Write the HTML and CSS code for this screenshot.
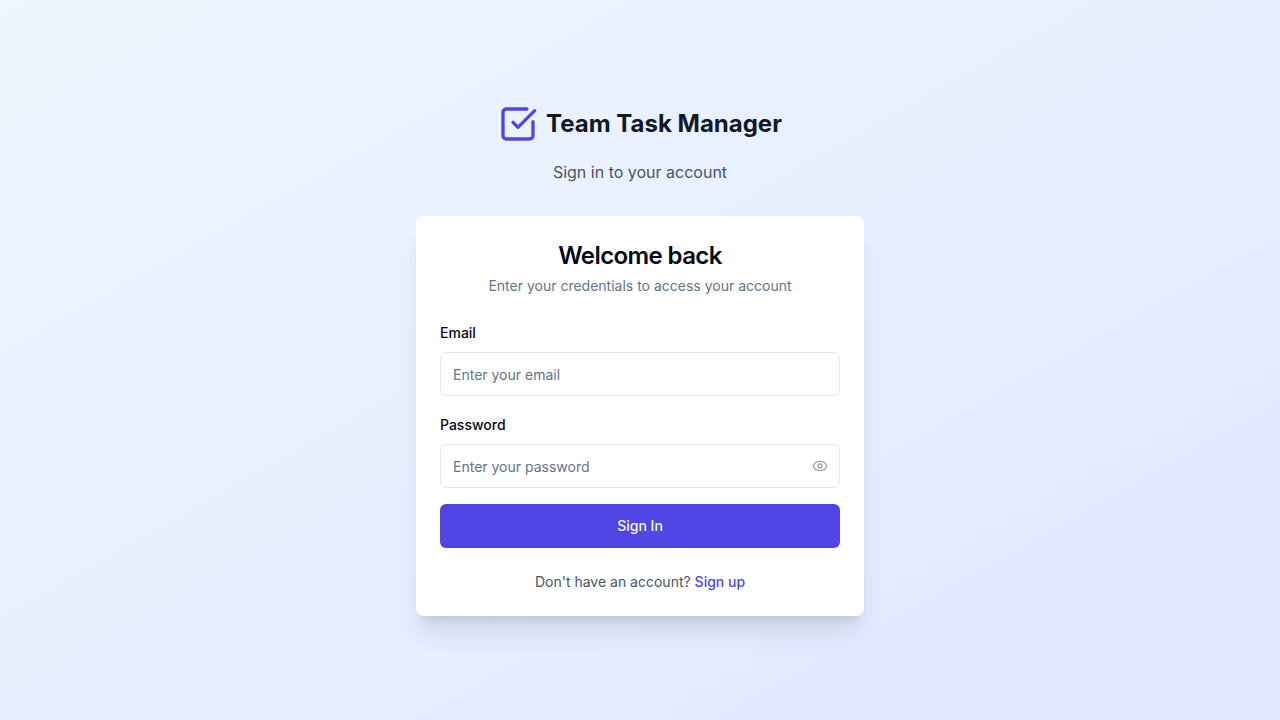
FILE: index.html
```html
<!DOCTYPE html>
<html lang="en">
<head>
<meta charset="utf-8">
<meta name="viewport" content="width=device-width, initial-scale=1">
<title>Team Task Manager</title>
<link rel="stylesheet" href="styles.css">
</head>
<body>
<main class="page">
  <div class="auth">
    <header class="brand">
      <div class="brand-row">
        <svg class="brand-icon" viewBox="0 0 24 24" aria-hidden="true"><path d="M21 10.656V19a2 2 0 0 1-2 2H5a2 2 0 0 1-2-2V5a2 2 0 0 1 2-2h12.344"/><path d="m9 11 3 3L22 4"/></svg>
        <h1 class="brand-name">Team Task Manager</h1>
      </div>
      <p class="brand-tagline">Sign in to your account</p>
    </header>
    <section class="card">
      <div class="card-header">
        <h2 class="card-title">Welcome back</h2>
        <p class="card-text">Enter your credentials to access your account</p>
      </div>
      <form class="form">
        <div class="field">
          <label class="label" for="email">Email</label>
          <div class="input-wrap">
            <input class="input" id="email" type="email" placeholder="Enter your email">
          </div>
        </div>
        <div class="field">
          <label class="label" for="password">Password</label>
          <div class="input-wrap">
            <input class="input input-password" id="password" type="password" placeholder="Enter your password">
            <button class="reveal" type="button" aria-label="Show password">
              <svg class="reveal-icon" viewBox="0 0 24 24" aria-hidden="true"><path d="M2.062 12.348a1 1 0 0 1 0-.696 10.75 10.75 0 0 1 19.876 0 1 1 0 0 1 0 .696 10.75 10.75 0 0 1-19.876 0"/><circle cx="12" cy="12" r="3"/></svg>
            </button>
          </div>
        </div>
        <button class="submit" type="submit">Sign In</button>
      </form>
      <p class="signup">Don't have an account? <a class="signup-link" href="#">Sign up</a></p>
    </section>
  </div>
</main>
</body>
</html>
```
FILE: styles.css
```css
*, *::before, *::after { box-sizing: border-box; }
body, h1, h2, p { margin: 0; }
body {
  font-family: Inter, "Liberation Sans", sans-serif;
  font-size: 16px;
  line-height: 24px;
  color: #020817;
  text-rendering: optimizeSpeed;
}
button, input { font: inherit; }
.page {
  min-height: 100vh;
  padding: 16px;
  display: flex;
  align-items: center;
  justify-content: center;
  background: linear-gradient(to bottom right, #eff6ff, #e0e7ff);
}
.auth { width: 100%; max-width: 448px; }
.brand { margin-bottom: 32px; text-align: center; }
.brand-row {
  display: flex;
  align-items: center;
  justify-content: center;
  gap: 8px;
  margin-bottom: 16px;
}
.brand-icon {
  width: 40px;
  height: 40px;
  fill: none;
  stroke: #4f46e5;
  stroke-width: 2;
  stroke-linecap: round;
  stroke-linejoin: round;
}
.brand-name { font-size: 24px; line-height: 32px; font-weight: 700; color: #111827; }
.brand-tagline { color: #4b5563; }
.card {
  padding: 24px;
  border-radius: 8px;
  background: #fff;
  box-shadow: 0 20px 25px -5px rgb(0 0 0 / 0.1), 0 8px 10px -6px rgb(0 0 0 / 0.1);
}
.card-header {
  display: flex;
  flex-direction: column;
  gap: 4px;
  margin-bottom: 24px;
  text-align: center;
}
.card-title { font-size: 24px; line-height: 32px; font-weight: 600; letter-spacing: -0.025em; }
.card-text { font-size: 14px; line-height: 20px; color: #64748b; }
.form { display: flex; flex-direction: column; gap: 16px; }
.label { font-size: 14px; line-height: 20px; font-weight: 500; }
.input {
  width: 100%;
  height: 44px;
  padding: 8px 12px;
  border: 1px solid #e2e8f0;
  border-radius: 6px;
  background: #fff;
  color: #020817;
  font-size: 14px;
  line-height: 20px;
}
.input::placeholder { color: #64748b; opacity: 1; }
.input-wrap { position: relative; display: flex; margin-top: 8px; }
.input-password { padding-right: 40px; }
.reveal {
  position: absolute;
  top: 0;
  right: 0;
  height: 100%;
  padding: 0 12px;
  display: flex;
  align-items: center;
  border: 0;
  background: none;
  cursor: pointer;
}
.reveal-icon {
  width: 16px;
  height: 16px;
  fill: none;
  stroke: #9ca3af;
  stroke-width: 2;
  stroke-linecap: round;
  stroke-linejoin: round;
}
.submit {
  height: 44px;
  border: 0;
  border-radius: 6px;
  background: #4f46e5;
  color: #f8fafc;
  font-size: 14px;
  line-height: 20px;
  font-weight: 500;
  cursor: pointer;
}
.signup { margin-top: 24px; font-size: 14px; line-height: 20px; text-align: center; color: #4b5563; }
.signup-link { color: #4f46e5; font-weight: 500; text-decoration: none; }
```
